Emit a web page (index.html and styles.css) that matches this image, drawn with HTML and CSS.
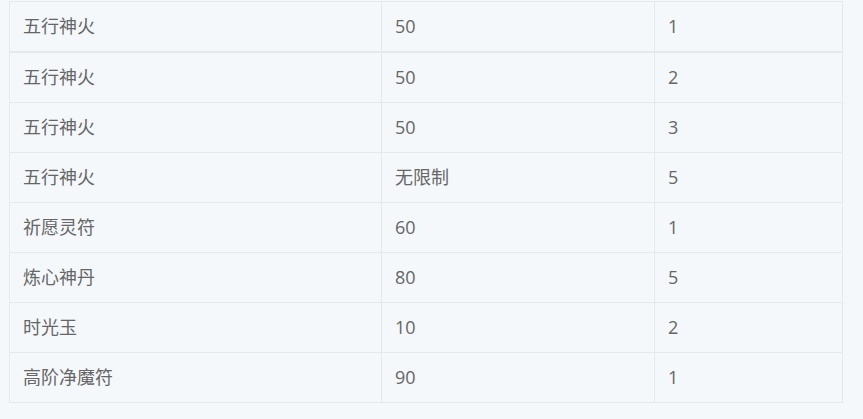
FILE: index.html
```html
<!DOCTYPE html>
<html lang="zh">
<head>
<meta charset="utf-8">
<link rel="stylesheet" href="styles.css">
</head>
<body>
<div class="wrap">
<table class="tbl">
<colgroup><col class="c1"><col class="c2"><col class="c3"></colgroup>
<thead>
<tr><td>五行神火</td><td>50</td><td>1</td></tr>
</thead>
<tbody>
<tr><td>五行神火</td><td>50</td><td>2</td></tr>
<tr><td>五行神火</td><td>50</td><td>3</td></tr>
<tr><td>五行神火</td><td>无限制</td><td>5</td></tr>
<tr><td>祈愿灵符</td><td>60</td><td>1</td></tr>
<tr><td>炼心神丹</td><td>80</td><td>5</td></tr>
<tr><td>时光玉</td><td>10</td><td>2</td></tr>
<tr><td>高阶净魔符</td><td>90</td><td>1</td></tr>
</tbody>
</table>
</div>
</body>
</html>
```

FILE: styles.css
```css
html, body {
  margin: 0;
  padding: 0;
  background: #f4f8fb;
}
.wrap {
  padding: 1px 0 0 9px;
}
.tbl {
  border-collapse: collapse;
  width: 833px;
  table-layout: fixed;
  font-family: "Open Sans", "Noto Sans CJK SC", sans-serif;
  font-size: 18px;
  color: #666;
}
.c1 { width: 372px; }
.c2 { width: 273px; }
.c3 { width: 188px; }
.tbl td {
  border: 1px solid #e6e9ec;
  padding: 12px 13px;
  line-height: 25px;
  height: 25px;
  vertical-align: middle;
}
.tbl thead td {
  border-bottom: 2px solid #e6e9ec;
}
```
